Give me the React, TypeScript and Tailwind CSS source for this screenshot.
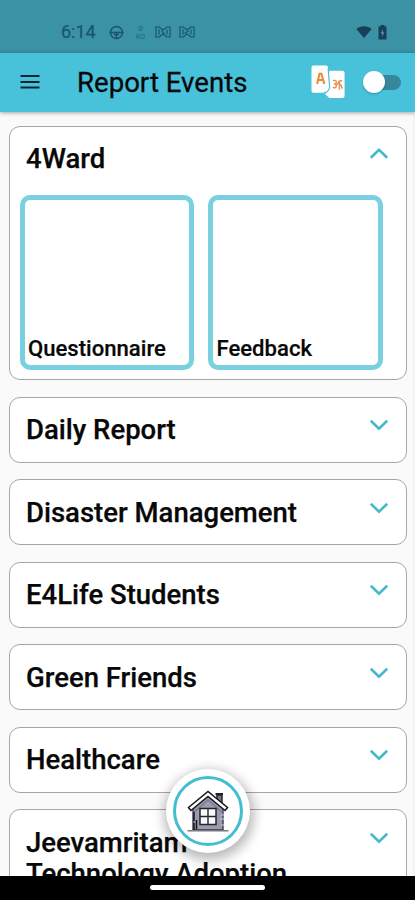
const FONT = "font-['Roboto','Liberation_Sans',sans-serif]";

function Chevron({ up = false }: { up?: boolean }) {
  return (
    <svg width="20" height="14" viewBox="0 0 20 14" fill="none" stroke="#45b9cb" strokeWidth="2.6" className="shrink-0">
      <path d={up ? 'M1.8 10.700 L10 2.700 L18.2 10.700' : 'M1.800 2.700 L10 10.700 L18.2 2.700'} />
    </svg>
  );
}

function Card({ title }: { title: string }) {
  return (
    <section className="flex min-h-[66px] shrink-0 items-start justify-between rounded-[11px] border border-[#a6a6a6] bg-white pt-[15px] pr-[17px] pl-[16px]">
      <h2 className="w-[290px] pt-[1.5px] text-[27.5px] leading-[31px] font-medium [-webkit-text-stroke:0.25px_#080808]">{title}</h2>
      <div className="pt-[5.5px]">
        <Chevron />
      </div>
    </section>
  );
}

function Tile({ label }: { label: string }) {
  return (
    <div className="flex h-[175px] w-[174.5px] items-end rounded-[10px] border-[5px] border-[#79d1df] bg-white pb-[4px] pl-[3.5px] text-[22.1px] leading-[26px] font-medium [-webkit-text-stroke:0.2px_#080808]">
      {label}
    </div>
  );
}

function StatusBar() {
  return (
    <div className="flex h-[53px] shrink-0 items-start bg-[#3b92a5] pr-[28px] pl-[61px] text-[#19556a]">
      <span className="mt-[21px] w-[36px] text-[18px] leading-[22px] [-webkit-text-stroke:0.2px_#19556a]">6:14</span>
      <svg className="mt-[25px] ml-[12px]" width="15" height="15" viewBox="0 0 15 15" fill="none" stroke="currentColor" strokeWidth="1.5">
        <circle cx="7.5" cy="7.5" r="6" />
        <path d="M0.5 7.5h14M5 9.5h5M7.5 8v5" />
      </svg>
      <div className="mt-[25px] ml-[12px] flex w-[9px] flex-col items-center text-[8px] leading-[8px] text-[#22607a]">
        <span>0</span>
        <span className="text-[7px]">KO</span>
      </div>
      <svg className="mt-[26px] ml-[10px]" width="16" height="12" viewBox="0 0 16 12" fill="none" stroke="currentColor" strokeWidth="1.200">
        <path d="M1 1h3l4 3 4-3h3v10h-3l-4-3-4 3H1zM4 3.500v5M12 3.500v5M6.500 5l3 2.500" />
      </svg>
      <svg className="mt-[26px] ml-[8px]" width="16" height="12" viewBox="0 0 16 12" fill="none" stroke="currentColor" strokeWidth="1.200">
        <path d="M1 1h3l4 3 4-3h3v10h-3l-4-3-4 3H1zM4 3.500v5M12 3.500v5M5.500 7.500l4-2.500" />
      </svg>
      <svg className="mt-[26px] ml-auto" width="16" height="12" viewBox="0 0 16 12" fill="#173f59">
        <path d="M0.3 3C4.5-.7 11.5-.7 15.7 3L8 12z" />
      </svg>
      <svg className="mt-[25px] ml-[6px]" width="9" height="15" viewBox="0 0 9 15">
        <path d="M2.5 0h4v1.5H8.5V14.5H.5V1.5h2z" fill="#173f59" />
        <path d="M5 4L2.7 8.5h1.7L4 12l2.4-4.5H4.8z" fill="#5d99a8" />
      </svg>
    </div>
  );
}

function TranslateIcon() {
  return (
    <svg width="35" height="35" viewBox="0 0 36 36" className="shrink-0">
      <path d="M19 6h13.5a2 2 0 0 1 2 2v24a2 2 0 0 1-2 2H19l-5-4.500z" fill="#fff" />
      <path d="M2.500 0.500h13a2 2 0 0 1 2 1.700l1.500 19c.3 2-1 4-3 7.300H2.500a2 2 0 0 1-2-2v-24a2 2 0 0 1 2-2z" fill="#fff" />
      <path d="M17.600 3.500l1.500 18c.3 3-2 6-4.500 7.500l-1-1.500" fill="none" stroke="#48bfd9" strokeWidth="1.200" />
      <path d="M6.300 19.500L8.700 9h2l3 10.500M7.100 15.500h5.200" fill="none" stroke="#ea883b" strokeWidth="2.100" />
      <path d="M22.500 16q4-.8 3.500 1.800-.4 1.700-2.200 1.700 2.700.2 2.200 2.500-1 2.500-3.500.7M26 20.500q2-.5 3.200-4.500v9.500M32 16.500q-2.600-1-2.800 1.500M29.200 19.500q2.500 1 2.800 5" fill="none" stroke="#e59455" strokeWidth="1.500" />
    </svg>
  );
}

function House() {
  return (
    <svg width="44" height="43" viewBox="0 0 44 43">
      <path d="M31 12V5h5v12" fill="#777789" stroke="#20202a" strokeWidth="1.500" />
      <path d="M29.500 4h7.500" stroke="#20202a" strokeWidth="2" />
      <path d="M7 18L22 5l15 13v22H7z" fill="#9a9bb0" stroke="#30303b" strokeWidth="1.300" />
      <path d="M7 23L22 10l15 13" fill="none" stroke="#777889" strokeWidth="1.300" />
      <path d="M2.500 17.500L22 1.500l19.500 16-2.500 3L22 6.500 5 20.500z" fill="#fff" stroke="#18181d" strokeWidth="1.600" />
      <path d="M14 18.500h16v16H14z" fill="#f8f8fa" stroke="#25252e" strokeWidth="1.500" />
      <path d="M22 18.500v16M14 26.500h16" stroke="#25252e" strokeWidth="1.400" />
      <path d="M8 22v18M10.500 30v9" stroke="#15151b" strokeWidth="1.500" strokeDasharray="9 2" />
      <path d="M1.500 40.700h41" stroke="#777780" strokeWidth="1.400" />
      <path d="M35 25h3M34 29h4M35 35h3" stroke="#d3d3dc" strokeWidth="1.200" />
    </svg>
  );
}

export default function App() {
  return (
    <div className={`${FONT} relative flex h-[900px] w-[415px] flex-col overflow-hidden bg-[#fafafa] text-[#080808]`}>
      <StatusBar />
      <header className="z-10 flex h-[58.5px] shrink-0 items-center bg-[#48c1db] pr-[14px] pl-[20px] shadow-[0_1px_4px_rgba(0,0,0,0.35)]">
        <svg width="20" height="16" viewBox="0 0 20 16" stroke="#08262e" strokeWidth="2">
          <path d="M0.500 2h19M0.500 8h19M0.500 13.500h19" />
        </svg>
        <h1 className="ml-[37px] pt-[1px] text-[27.6px] leading-[32px] whitespace-nowrap [-webkit-text-stroke:0.3px_#080808]">Report Events</h1>
        <div className="ml-auto flex items-center">
          <TranslateIcon />
          <div className="ml-[17px] flex h-[15px] w-[38px] items-center rounded-full bg-gradient-to-r from-transparent from-30% to-[#38869c] to-30%">
            <div className="size-[22px] shrink-0 rounded-full bg-white shadow-[0_1px_2px_rgba(0,0,0,0.25)]" />
          </div>
        </div>
      </header>

      <main className="flex min-h-0 grow flex-col gap-[16.5px] overflow-hidden border-r-2 border-[#f3f3f3] pt-[14px] pr-[6.500px] pl-[9px]">
        <section className="h-[254.5px] shrink-0 rounded-[11px] border border-[#a6a6a6] bg-white">
          <div className="flex items-start justify-between pt-[15px] pr-[17px] pl-[16px]">
            <h2 className="pt-[1px] text-[27.5px] leading-[31.5px] font-medium [-webkit-text-stroke:0.25px_#080808]">4Ward</h2>
            <div className="pt-[5.5px]">
              <Chevron up />
            </div>
          </div>
          <div className="mt-[21px] flex gap-[14px] pl-[9.5px]">
            <Tile label="Questionnaire" />
            <Tile label="Feedback" />
          </div>
        </section>
        <Card title="Daily Report" />
        <Card title="Disaster Management" />
        <Card title="E4Life Students" />
        <Card title="Green Friends" />
        <Card title="Healthcare" />
        <Card title="Jeevamritam Technology Adoption" />
      </main>

      <footer className="flex h-[24.5px] shrink-0 justify-center bg-black pt-[9.5px]">
        <div className="h-[5px] w-[115px] rounded-full bg-white" />
      </footer>

      <button className="absolute top-[769px] left-[166px] flex size-[84px] items-center justify-center rounded-full bg-white shadow-[1px_4px_12px_3px_rgba(0,0,0,0.28)]">
        <span className="flex size-[70px] items-center justify-center rounded-full border-[3px] border-[#43bdd0]">
          <House />
        </span>
      </button>
    </div>
  );
}
